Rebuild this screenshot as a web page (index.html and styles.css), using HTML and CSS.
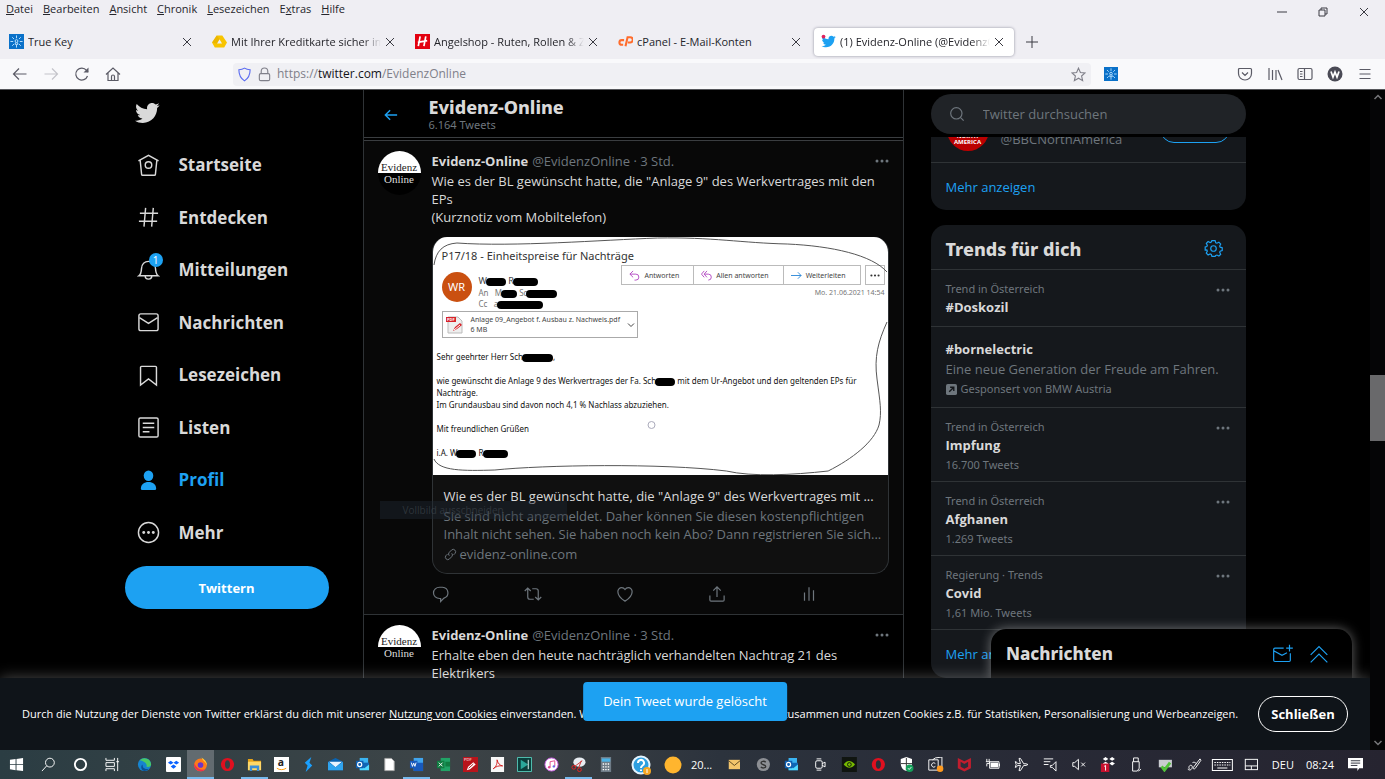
FILE: index.html
```
<!DOCTYPE html>
<html lang="de">
<head>
<meta charset="utf-8">
<title>(1) Evidenz-Online (@EvidenzOnline) / Twitter</title>
<link rel="stylesheet" href="styles.css">
</head>
<body>
<svg class="defs" aria-hidden="true">
  <symbol id="x" viewBox="0 0 10 10"><path d="M1 1l8 8M9 1l-8 8"/></symbol>
  <symbol id="dots" viewBox="0 0 14 4"><circle cx="2" cy="2" r="1.5"/><circle cx="7" cy="2" r="1.5"/><circle cx="12" cy="2" r="1.5"/></symbol>
  <symbol id="truekey" viewBox="0 0 16 16"><path fill="#0a71c9" stroke="none" d="M0 0h16v16H0z"/><g stroke="#bfe3ff" stroke-width="1" fill="none"><path d="M8 1.500v3M8 11.500v3M1.500 8h3M11.500 8h3M3.400 3.400l2 2M10.600 10.600l2 2M12.600 3.400l-2 2M5.400 10.600l-2 2"/><circle cx="8" cy="7.500" r="1.500"/><path d="M7 9l-.5 2h3L9 9"/></g></symbol>
  <symbol id="bird" viewBox="0 0 24 24"><path d="M23.643 4.937c-.835.37-1.732.62-2.675.733.962-.576 1.7-1.49 2.048-2.578-.9.534-1.897.922-2.958 1.13-.85-.904-2.06-1.47-3.4-1.47-2.572 0-4.658 2.086-4.658 4.66 0 .364.042.718.12 1.06-3.873-.195-7.304-2.05-9.602-4.868-.4.69-.63 1.49-.63 2.342 0 1.616.823 3.043 2.072 3.878-.764-.025-1.482-.234-2.11-.583v.06c0 2.257 1.605 4.14 3.737 4.568-.392.106-.803.162-1.227.162-.3 0-.593-.028-.877-.082.593 1.85 2.313 3.198 4.352 3.234-1.595 1.25-3.604 1.995-5.786 1.995-.376 0-.747-.022-1.112-.065 2.062 1.323 4.51 2.093 7.14 2.093 8.57 0 13.255-7.098 13.255-13.254 0-.2-.005-.402-.014-.602.91-.658 1.7-1.477 2.323-2.41z"/></symbol>
  <symbol id="outlook" viewBox="0 0 16 16"><g stroke="none"><path fill="#3bb4f2" d="M5 1h9v8H5z"/><path fill="#1066b5" d="M5 6h10v8H5z"/><path fill="#50d9ff" d="M5 9l5 3 5-4v6H5z"/><path fill="#0f5fb0" d="M1 4h8v8H1z"/></g><circle cx="5" cy="8" r="2.200" fill="none" stroke="#fff" stroke-width="1.300"/></symbol>
  <symbol id="opera" viewBox="0 0 16 16"><path fill="#e0101f" stroke="none" fill-rule="evenodd" d="M8 1a7 7 0 1 0 0 14A7 7 0 0 0 8 1zm0 2.500c1.700 0 2.700 2 2.700 4.500s-1 4.500-2.700 4.500S5.300 10.500 5.300 8s1-4.500 2.700-4.500z"/></symbol>
</svg>

<header class="browser">
  <div class="topline">
    <nav class="menubar" aria-label="Menü">
      <button><u>D</u>atei</button><button><u>B</u>earbeiten</button><button><u>A</u>nsicht</button><button><u>C</u>hronik</button><button><u>L</u>esezeichen</button><button>E<u>x</u>tras</button><button><u>H</u>ilfe</button>
    </nav>
    <div class="winctl">
      <button aria-label="Minimieren"><svg class="line" viewBox="0 0 10 10"><path d="M0 5h10"/></svg></button>
      <button aria-label="Verkleinern"><svg class="line" viewBox="0 0 10 10"><path d="M1 3h6v6H1zM3 3V1h6v6H7"/></svg></button>
      <button aria-label="Schließen"><svg class="line"><use href="#x"/></svg></button>
    </div>
  </div>
  <div class="tabs">
    <div class="tab"><svg class="fav"><use href="#truekey"/></svg><span>True Key</span><button aria-label="Tab schließen"><svg class="line"><use href="#x"/></svg></button></div>
    <div class="tab cut"><svg class="fav" viewBox="0 0 16 16"><path fill="#f8c400" fill-rule="evenodd" d="M5 1.500h6l5 7.500-3 5.500H3L0 9zm3 4L5.300 10h5.400z"/><path fill="#e0a800" d="M5 1.500L8 5.500 5.300 10 0 9z" opacity=".5"/></svg><span>Mit Ihrer Kreditkarte sicher im Internet</span><button aria-label="Tab schließen"><svg class="line"><use href="#x"/></svg></button></div>
    <div class="tab cut"><svg class="fav" viewBox="0 0 16 16"><path fill="#e3000f" d="M0 0h16v16H0z"/><path d="M5.500 2.500L3.500 13M11.500 2.500L9.500 13M3 9l10-2" stroke="#fff" stroke-width="1.800" fill="none"/></svg><span>Angelshop - Ruten, Rollen &amp; Zubehör</span><button aria-label="Tab schließen"><svg class="line"><use href="#x"/></svg></button></div>
    <div class="tab"><svg class="fav" viewBox="0 0 16 16"><path d="M6.500 6.500H4a2.500 2.500 0 0 0 0 5h1.500M8 13l2.200-9.500H13a2.500 2.500 0 0 1 0 5.500h-2.500" fill="none" stroke="#ff6c2c" stroke-width="2.200"/></svg><span>cPanel - E-Mail-Konten</span><button aria-label="Tab schließen"><svg class="line"><use href="#x"/></svg></button></div>
    <div class="tab active cut"><svg class="fav" viewBox="0 0 24 24"><use href="#bird" fill="#1da1f2"/><circle cx="4" cy="4" r="3" fill="#e0245e"/></svg><span>(1) Evidenz-Online (@EvidenzOnline)</span><button aria-label="Tab schließen"><svg class="line"><use href="#x"/></svg></button></div>
    <button class="newtab" aria-label="Neuer Tab"><svg class="line" viewBox="0 0 12 12"><path d="M6 0v12M0 6h12"/></svg></button>
  </div>
  <div class="toolbar">
    <div class="tools">
      <button aria-label="Zurück"><svg viewBox="0 0 16 16"><path d="M14.500 8h-13M7 2.500L1.500 8 7 13.500"/></svg></button>
      <button aria-label="Vor" class="dim"><svg viewBox="0 0 16 16"><path d="M1.500 8h13M9 2.500L14.500 8 9 13.500"/></svg></button>
      <button aria-label="Neu laden"><svg viewBox="0 0 16 16"><path d="M13.500 10A6 6 0 1 1 12.500 4.300L14 6"/><path d="M14.500 1.500v5h-5z" fill="#5b5b66" stroke="none"/></svg></button>
      <button aria-label="Startseite"><svg viewBox="0 0 16 16"><path d="M1 8.500L8 2l7 6.500M3 7v7.500h10V7M6.500 14.500v-4a1.500 1.500 0 0 1 3 0v4"/></svg></button>
    </div>
    <label class="url">
      <svg viewBox="0 0 16 16"><path stroke="#5b6cf0" d="M8 1.200c2 1.300 4 1.700 6 1.800 0 5-1.500 9-6 11.800C3.500 12 2 8 2 3c2-.1 4-.5 6-1.800z"/></svg>
      <svg viewBox="0 0 16 16"><rect x="2.500" y="7" width="11" height="7.500" rx="1.500"/><path d="M4.500 7V4.500a3.500 3.500 0 0 1 7 0V7"/></svg>
      <span class="addr">https://<b>twitter.com</b>/EvidenzOnline</span>
      <svg viewBox="0 0 16 16"><path d="M8 1.200l2 4.600 5 .5-3.700 3.300 1.100 5L8 12l-4.400 2.600 1.100-5L1 6.300l5-.5z"/></svg>
    </label>
    <button class="ext" aria-label="True Key"><svg><use href="#truekey"/></svg></button>
    <div class="tools right">
      <button aria-label="Pocket"><svg viewBox="0 0 16 16"><path d="M2.500 2.500h11a1 1 0 0 1 1 1v4a6.500 6.500 0 0 1-13 0v-4a1 1 0 0 1 1-1zM5 6.500l3 3 3-3"/></svg></button>
      <button aria-label="Bibliothek"><svg viewBox="0 0 16 16"><path d="M2 2v12M5.500 4v10M9 4v10M11 4l4 10"/></svg></button>
      <button aria-label="Seitenleiste"><svg viewBox="0 0 16 16"><rect x="1" y="2.500" width="14" height="11" rx="1.500"/><path d="M7.500 2.500v11M3 5.500h2.500M3 8h2.500M3 10.500h2.500"/></svg></button>
      <button aria-label="Konto"><svg viewBox="0 0 16 16"><circle cx="8" cy="8" r="7.500" fill="#4a4a55" stroke="none"/><path d="M4 5.500l2 5.500 2-5 2 5 2-5.500" stroke="#fff" stroke-width="1.700"/></svg></button>
      <button aria-label="Menü"><svg viewBox="0 0 16 16"><path d="M2.500 3.500h11M2.500 8h11M2.500 12.500h11"/></svg></button>
    </div>
  </div>
</header>

<div class="viewport">
  <div class="page">
    <nav class="side" aria-label="Hauptnavigation">
      <a class="logo" href="#" aria-label="Twitter"><svg><use href="#bird"/></svg></a>
      <ul>
        <li><a href="#"><svg viewBox="0 0 24 24"><path d="M1.500 7.300L12 1.500l10.500 5.800M3.300 6.500l1.500 14.700a1 1 0 0 0 1 .9h12.400a1 1 0 0 0 1-.9l1.500-14.700"/><circle cx="12" cy="11.500" r="3.400"/></svg><span>Startseite</span></a></li>
        <li><a href="#"><svg viewBox="0 0 24 24"><path d="M3 7.500h19M2 16h19M9 2L7.300 21.500M17 2l-1.700 19.500"/></svg><span>Entdecken</span></a></li>
        <li><a href="#"><svg viewBox="0 0 24 24"><path d="M2 17.500h20c-2-1.500-2.500-4-2.700-7.500C19 5.500 16 2.500 12 2.500S5 5.500 4.700 10c-.2 3.500-.7 6-2.700 7.500zM8.500 17.500a3.500 3.500 0 0 0 7 0"/></svg><i class="badge">1</i><span>Mitteilungen</span></a></li>
        <li><a href="#"><svg viewBox="0 0 24 24"><rect x="2" y="3" width="20" height="17.500" rx="2"/><path d="M2.500 7L12 13l9.500-6"/></svg><span>Nachrichten</span></a></li>
        <li><a href="#"><svg viewBox="0 0 24 24"><path d="M3.700 22V3.500a1 1 0 0 1 1-1h14.600a1 1 0 0 1 1 1V22L12 15.500z"/></svg><span>Lesezeichen</span></a></li>
        <li><a href="#"><svg viewBox="0 0 24 24"><rect x="2" y="2" width="20" height="20" rx="1.500"/><path d="M6 7.500h12M6 12h12M6 16.500h7"/></svg><span>Listen</span></a></li>
        <li class="on"><a href="#"><svg viewBox="0 0 24 24"><ellipse cx="12" cy="7" rx="5" ry="5.500"/><path d="M4 20.500c0-4.500 3.500-7 8-7s8 2.500 8 7a1.500 1.500 0 0 1-1.500 1.500h-13A1.500 1.500 0 0 1 4 20.500z"/></svg><span>Profil</span></a></li>
        <li><a href="#"><svg viewBox="0 0 24 24"><circle cx="12" cy="12" r="10.500"/><g fill="currentColor" stroke="none"><circle cx="7" cy="12" r="1.500"/><circle cx="12" cy="12" r="1.500"/><circle cx="17" cy="12" r="1.500"/></g></svg><span>Mehr</span></a></li>
      </ul>
      <button class="tweetbtn">Twittern</button>
    </nav>

    <main class="feed">
      <header class="feedhead">
        <button class="back" aria-label="Zurück"><svg viewBox="0 0 16 16"><path d="M15 8H1.500M7 2.500L1.500 8 7 13.500"/></svg></button>
        <div><h1>Evidenz-Online</h1><p>6.164 Tweets</p></div>
      </header>
      <article class="tweet hot">
        <div class="avatar"><span>Evidenz</span><span>Online</span></div>
        <div class="body">
          <div class="who"><b>Evidenz-Online</b> @EvidenzOnline · 3 Std.<button aria-label="Mehr"><svg><use href="#dots"/></svg></button></div>
          <p>Wie es der BL gewünscht hatte, die "Anlage 9" des Werkvertrages mit den EPs<br>(Kurznotiz vom Mobiltelefon)</p>
          <a class="card" href="#">
            <div class="mail">
              <h2>P17/18 - Einheitspreise für Nachträge</h2>
              <div class="mailhead">
                <div class="wr">WR</div>
                <div class="rcpt">
                  <div class="from">W<i class="ink s20"></i> R<i class="ink s25"></i></div>
                  <div>An&nbsp; &nbsp;M<i class="ink s15"></i> Sc<i class="ink s30"></i></div>
                  <div>Cc&nbsp; &nbsp;a<i class="ink s45"></i></div>
                </div>
                <div class="acts">
                  <div class="btns">
                    <span><svg viewBox="0 0 12 12" class="purple"><path d="M4.500 1L1 4.500 4.500 8M1 4.500h6.500a3 3 0 0 1 0 6.500H6"/></svg>Antworten</span>
                    <span><svg viewBox="0 0 12 12" class="purple"><path d="M3.500 1L.500 4.500 3.500 8M6.500 1L3.500 4.500 6.500 8M3.500 4.500H8a3 3 0 0 1 0 6.500"/></svg>Allen antworten</span>
                    <span><svg viewBox="0 0 12 12" class="blue"><path d="M0 6h11M7.500 2.500L11 6 7.500 9.500"/></svg>Weiterleiten</span>
                    <span class="more"><svg><use href="#dots"/></svg></span>
                  </div>
                  <time>Mo. 21.06.2021 14:54</time>
                </div>
              </div>
              <div class="attach">
                <svg viewBox="0 0 18 18"><path d="M2 1h10l4 4v12H2z" fill="#eee" stroke="#bbb"/><path d="M0 1h10v5H0z" fill="#d8232a" stroke="none"/><path d="M7 15l2-4 5-4 2 2-5 4z" fill="#d8232a" stroke="none"/><path d="M8 14l6-5" stroke="#fff"/><text x="1" y="5" font-size="4" fill="#fff" stroke="none" font-family="Open Sans" font-weight="700">PDF</text></svg>
                <div>Anlage 09_Angebot f. Ausbau z. Nachweis.pdf<br>6 MB</div>
                <svg class="chev" viewBox="0 0 8 8"><path d="M1 2.500l3 3 3-3"/></svg>
              </div>
              <div class="letter">
                <p>Sehr geehrter Herr Sch<i class="ink s30"></i>,</p>
                <p>wie gewünscht die Anlage 9 des Werkvertrages der Fa. Sch<i class="ink s20"></i> mit dem Ur-Angebot und den geltenden EPs für Nachträge.<br>Im Grundausbau sind davon noch 4,1 % Nachlass abzuziehen.</p>
                <p>Mit freundlichen Grüßen</p>
                <p>i.A. W<i class="ink s20"></i> R<i class="ink s25"></i></p>
              </div>
              <svg class="scribble" viewBox="0 0 456 238" preserveAspectRatio="none"><path d="M1 28C3 14 10 7 24 6C80 10 170 3 225 1C280 0 310 6 355 7C400 9 440 18 455 35M455 85C446 105 442 120 445 142C448 165 450 175 447 188C442 205 420 222 396 234C360 238 320 240 294 234C230 226 110 228 62 233C30 234 6 234 1 222"/><circle cx="219" cy="188" r="3.500" stroke="#aab"/></svg>
            </div>
            <div class="cardtext">
              <div class="t">Wie es der BL gewünscht hatte, die "Anlage 9" des Werkvertrages mit ...</div>
              <div class="desc">Sie sind nicht angemeldet. Daher können Sie diesen kostenpflichtigen<br>Inhalt nicht sehen. Sie haben noch kein Abo? Dann registrieren Sie sich...</div>
              <div class="link"><svg viewBox="0 0 16 16"><path d="M6.500 9.500a3 3 0 0 1 0-4.200l3-3a3 3 0 0 1 4.200 4.200l-2 2M9.500 6.500a3 3 0 0 1 0 4.200l-3 3a3 3 0 0 1-4.200-4.200l2-2"/></svg>evidenz-online.com</div>
            </div>
          </a>
          <div class="actions">
            <button aria-label="Antworten"><svg viewBox="0 0 24 24"><path d="M10 3h4a8 7.500 0 0 1 2 14.500L11.500 22v-4H10a8 7.500 0 0 1 0-15z"/></svg></button>
            <button aria-label="Retweeten"><svg viewBox="0 0 24 24"><path d="M1 8l4-4 4 4M5 4v12a3 3 0 0 0 3 3h5M23 16l-4 4-4-4M19 20V8a3 3 0 0 0-3-3h-5"/></svg></button>
            <button aria-label="Gefällt mir"><svg viewBox="0 0 24 24"><path d="M12 21.500C7 18.500 2.500 14 2.500 9A5.200 5.200 0 0 1 7.700 3.500C9.500 3.500 11 4.500 12 6c1-1.500 2.500-2.500 4.300-2.500A5.200 5.200 0 0 1 21.500 9c0 5-4.500 9.500-9.500 12.500z"/></svg></button>
            <button aria-label="Teilen"><svg viewBox="0 0 24 24"><path d="M12 16V2.500M7 7.500l5-5 5 5M2.500 14v6a1.500 1.500 0 0 0 1.500 1.500h16a1.500 1.500 0 0 0 1.500-1.500v-6"/></svg></button>
            <button aria-label="Statistik"><svg viewBox="0 0 24 24"><path d="M6 21V10M12 21V3M18 21V7"/></svg></button>
          </div>
        </div>
      </article>
      <article class="tweet">
        <div class="avatar"><span>Evidenz</span><span>Online</span></div>
        <div class="body">
          <div class="who"><b>Evidenz-Online</b> @EvidenzOnline · 3 Std.<button aria-label="Mehr"><svg><use href="#dots"/></svg></button></div>
          <p>Erhalte eben den heute nachträglich verhandelten Nachtrag 21 des<br>Elektrikers</p>
        </div>
      </article>
      <div class="ghost">Vollbild ausschneiden</div>
    </main>

    <aside class="right-col">
      <label class="search"><svg viewBox="0 0 24 24"><circle cx="11" cy="11" r="8.500"/><path d="M17 17l5 5"/></svg><input type="text" placeholder="Twitter durchsuchen" aria-label="Twitter durchsuchen"></label>
      <section class="box first">
        <div class="follow"><div class="bbc">NORTH<br>AMERICA</div><span>@BBCNorthAmerica</span><button>Folgen</button></div>
        <a class="morelink" href="#">Mehr anzeigen</a>
      </section>
      <section class="box">
        <header><h2>Trends für dich</h2><button aria-label="Einstellungen"><svg viewBox="0 0 24 24"><circle cx="12" cy="12" r="3.500"/><path d="M10 2h4l.8 2.700 1.500.6 2.500-1.300 2.300 2.300-1.300 2.500.6 1.500 2.600.7v3.500l-2.600.8-.6 1.500 1.300 2.500-2.300 2.300-2.500-1.300-1.500.6L14 22h-4l-.8-2.600-1.500-.6-2.500 1.300-2.300-2.300 1.300-2.500-.6-1.500L1.500 14v-4l2.100-.5.6-1.500-1.300-2.500 2.300-2.300 2.500 1.300 1.500-.6z"/></svg></button></header>
        <div class="trend"><small>Trend in Österreich</small><b>#Doskozil</b><button aria-label="Mehr"><svg><use href="#dots"/></svg></button></div>
        <div class="trend promo"><b>#bornelectric</b><span>Eine neue Generation der Freude am Fahren.</span><small><svg viewBox="0 0 12 12"><rect width="12" height="12" rx="2" fill="#6e767d"/><path d="M3.500 8.500L8 4M4.500 3.500h4v4" stroke="#15181c" stroke-width="1.500" fill="none"/></svg>Gesponsert von BMW Austria</small></div>
        <div class="trend full"><small>Trend in Österreich</small><b>Impfung</b><small>16.700 Tweets</small><button aria-label="Mehr"><svg><use href="#dots"/></svg></button></div>
        <div class="trend full"><small>Trend in Österreich</small><b>Afghanen</b><small>1.269 Tweets</small><button aria-label="Mehr"><svg><use href="#dots"/></svg></button></div>
        <div class="trend full"><small>Regierung · Trends</small><b>Covid</b><small>1,61 Mio. Tweets</small><button aria-label="Mehr"><svg><use href="#dots"/></svg></button></div>
        <a class="morelink" href="#">Mehr anzeigen</a>
      </section>
    </aside>

    <section class="drawer">
      <h2>Nachrichten</h2>
      <button aria-label="Neue Nachricht"><svg viewBox="0 0 24 24"><path d="M14 5H3.500A1.500 1.500 0 0 0 2 6.500v13A1.500 1.500 0 0 0 3.500 21h17a1.500 1.500 0 0 0 1.500-1.500V11M2 8l10 5.500 6-3M21 1v8M17 5h8"/></svg></button>
      <button aria-label="Öffnen"><svg viewBox="0 0 24 24"><path d="M2 13L12 3l10 10M2 22l10-10 10 10"/></svg></button>
    </section>
    <section class="cookies">
      <p>Durch die Nutzung der Dienste von Twitter erklärst du dich mit unserer <a href="#">Nutzung von Cookies</a> einverstanden. Wir und unsere Partner arbeiten global zusammen und nutzen Cookies z.B. für Statistiken, Personalisierung und Werbeanzeigen.</p>
      <button>Schließen</button>
    </section>
    <div class="toast" role="status">Dein Tweet wurde gelöscht</div>
  </div>
  <div class="scroll" aria-hidden="true">
    <svg viewBox="0 0 10 10"><path d="M1.500 7L5 3.500 8.500 7"/></svg><div class="thumb"></div><svg viewBox="0 0 10 10"><path d="M1.500 3L5 6.500 8.500 3"/></svg>
  </div>
</div>

<footer class="taskbar">
  <div class="sys">
    <button aria-label="Start"><svg viewBox="0 0 16 16"><path fill="#fff" stroke="none" d="M1 3l6-1v5.600H1zM8 2l7-1v6.600H8zM1 8.500h6V14l-6-1zM8 8.500h7V15l-7-1z"/></svg></button>
    <button aria-label="Suche"><svg viewBox="0 0 16 16"><circle cx="9.500" cy="6" r="4.700"/><path d="M6 9.500L1 15"/></svg></button>
    <button aria-label="Cortana"><svg viewBox="0 0 16 16"><circle cx="8" cy="8" r="6" stroke-width="2"/></svg></button>
    <button aria-label="Aufgaben"><svg viewBox="0 0 16 16"><path d="M1 1v2.500h9V1M1 15v-2.500h9V15M1 6h9v4H1zM13.500 1v14M12 5h3"/></svg></button>
    <button aria-label="Edge"><svg viewBox="0 0 16 16"><circle cx="8" cy="8" r="7" fill="#1684cf" stroke="none"/><path fill="#49c965" stroke="none" d="M3 3.500A7 7 0 0 1 15 8c0 2-2 3-5 2.500 1.500-3-2-6-7-7z"/><path fill="#0b4f94" stroke="none" d="M6 8c-.5 4 3 5.500 7 4.500A7 7 0 0 1 6 14.500C4 12 4 9 6 8z"/></svg></button>
  </div>
  <div class="apps">
    <button aria-label="Dropbox"><svg viewBox="0 0 16 16"><rect width="16" height="16" rx="1" fill="#fff" stroke="none"/><path fill="#0a62ff" stroke="none" d="M5 4l3 2-3 2-3-2zM11 4l3 2-3 2-3-2zM8 8l3 2-3 2.500L5 10z"/></svg></button>
    <button aria-label="Firefox" class="cur run"><svg viewBox="0 0 16 16"><circle cx="8" cy="8.500" r="6.800" fill="#ff7a1a" stroke="none"/><path fill="#ffcf30" stroke="none" d="M9 .5c3 2 6 4.500 5.800 8.500C14 5.500 11 5 9 .5z"/><path fill="#f0324b" stroke="none" d="M1.300 7A7 7 0 0 0 8 15.300c2.500 0 4-1 5.500-2.500C8 15 4 12 1.300 7z"/><circle cx="8" cy="8.500" r="3" fill="#6a35c9" stroke="none"/></svg></button>
    <button aria-label="Opera"><svg><use href="#opera"/></svg></button>
    <button aria-label="Explorer" class="run"><svg viewBox="0 0 16 16"><path fill="#e8a317" stroke="none" d="M1 2h5l1 2h8v10H1z"/><path fill="#ffd867" stroke="none" d="M1 5h14v9H1z"/><path fill="#3d8fd6" stroke="none" d="M3 9h10v6h-2.500v-3h-5v3H3z"/></svg></button>
    <button aria-label="Amazon"><svg viewBox="0 0 16 16"><path fill="#fff" stroke="none" d="M0 0h16v16H0z"/><text x="4" y="10" font-size="11" font-weight="700" font-family="Open Sans" fill="#222" stroke="none">a</text><path d="M3 12c3 2 7 2 10 0" stroke="#f90"/></svg></button>
    <button aria-label="App"><svg viewBox="0 0 16 16"><path fill="#1aa0ff" stroke="none" d="M11 0L4 6l3 3-2 7 7-7-3-3z"/></svg></button>
    <button aria-label="Mail"><svg viewBox="0 0 16 16"><path fill="#0a63b0" stroke="none" d="M0 5l8-4 8 4v9H0z"/><path fill="#e8f4ff" stroke="none" d="M1 5h14l-7 6z"/><path fill="#2fa4ef" stroke="none" d="M0 5l8 6 8-6v9H0z"/></svg></button>
    <button aria-label="Outlook"><svg><use href="#outlook"/></svg></button>
    <button aria-label="Dokument"><svg viewBox="0 0 16 16"><path fill="#fff" stroke="#aaa" d="M3 1.500h7l3 3v10H3z"/></svg></button>
    <button aria-label="Word" class="run"><svg viewBox="0 0 16 16"><path fill="#41a5ee" stroke="none" d="M5 1h10v14H5z"/><path fill="#185abd" stroke="none" d="M5 6h10v9H5zM1 4h8v8H1z"/><path d="M2.500 6l1.200 4L5 6.500 6.300 10l1.200-4" stroke="#fff"/></svg></button>
    <button aria-label="Excel"><svg viewBox="0 0 16 16"><path fill="#21a366" stroke="none" d="M5 1h10v14H5z"/><path fill="#107c41" stroke="none" d="M10 5h5v5h-5zM1 4h8v8H1z"/><path d="M3 6l4 4M7 6l-4 4" stroke="#fff"/></svg></button>
    <button aria-label="PDF-Editor"><svg viewBox="0 0 16 16"><path fill="#b8141b" stroke="none" d="M0 0h16v16H0z"/><path fill="#fff" stroke="none" d="M4 14l1.500-3.500L11 5.500l2.500 2.500-6 5z"/><path d="M6 12l5-4.500" stroke="#b8141b"/><text x="1" y="4.500" font-size="4.500" font-family="Open Sans" fill="#fff" stroke="none">PDF</text></svg></button>
    <button aria-label="Acrobat"><svg viewBox="0 0 16 16"><path fill="#f7f7f7" stroke="none" d="M1 0h14v16H1z"/><path d="M3.500 12.500C7 10 8 6 7.500 3c1 4 3 6 6 6.500-4-.5-7 .5-10 3z" stroke="#d11a1a"/></svg></button>
    <button aria-label="Filmora"><svg viewBox="0 0 16 16"><path fill="#0b3f3c" stroke="#54c7b8" d="M.5.5h15v15H.5z"/><path fill="#2aa79a" stroke="none" d="M4 3l8 5-8 5z"/><path d="M12 3v10" stroke="#e6fffa"/></svg></button>
    <button aria-label="iTunes"><svg viewBox="0 0 16 16"><circle cx="8" cy="8" r="7" fill="#fff" stroke="#c85be0"/><path d="M6.500 11V5l5-1v6" stroke="#e0468c"/><circle cx="5.500" cy="11" r="1.300" fill="#e0468c" stroke="none"/><circle cx="10.500" cy="10" r="1.300" fill="#6a6ae0" stroke="none"/></svg></button>
    <button aria-label="Snipping Tool" class="run"><svg viewBox="0 0 16 16"><ellipse cx="9" cy="5.500" rx="6.500" ry="5" fill="#e8edf2" stroke="none"/><path d="M4 10l8-6M8 12L11 4" stroke="#c33"/><circle cx="3" cy="11" r="2" stroke="#e22"/><circle cx="9" cy="13.500" r="2" stroke="#e22"/></svg></button>
    <button aria-label="Rechner"><svg viewBox="0 0 16 16"><path fill="#6f7c87" stroke="none" d="M3 0h11v16H3z"/><path fill="#4bb4e8" stroke="none" d="M4 1.500h9V5H4z"/><path d="M5 7.500h7M5 10.500h7M5 13.500h7" stroke="#fff" stroke-width="1.500" stroke-dasharray="1.500 1.200"/></svg></button>
  </div>
  <div class="sys big">
    <button aria-label="Hilfe"><svg viewBox="0 0 20 20"><circle cx="10" cy="10" r="8.500" fill="#2d9fe0" stroke="#e4f4ff" stroke-width="2"/><path d="M7 8a3 3 0 1 1 4.500 2.500C10.300 11.300 10 12 10 13M10 14.500V16" stroke="#fff" stroke-width="2"/><circle cx="16" cy="16" r="4" fill="#f5a623" stroke="none"/><path d="M16 14v4" stroke="#fff"/></svg></button>
    <button aria-label="Wetter"><svg viewBox="0 0 20 20"><circle cx="10" cy="10" r="8.500" fill="#ffb52e" stroke="none"/></svg></button>
  </div>
  <span class="temp">20...</span>
  <div class="tray">
    <svg viewBox="0 0 16 16"><path fill="#f3c56b" stroke="none" d="M2 3h12v10H2z"/><path d="M2 4l6 5 6-5" stroke="#5a4520"/></svg>
    <svg viewBox="0 0 16 16"><circle cx="8" cy="8" r="7" fill="#8c8f94" stroke="none"/><path d="M10.500 5.500C9 4 5.500 4.500 5.500 6.500S10.500 8 10.500 10s-4 2.200-5.200.5" stroke="#333" stroke-width="1.500"/></svg>
    <svg><use href="#outlook"/></svg>
    <svg viewBox="0 0 16 16"><rect x="3" y="4" width="7" height="8" rx="1.500"/><path d="M10 7l3-1.500v5L10 9M4 2h5M4 14h5"/></svg>
    <svg viewBox="0 0 16 16"><path fill="#101510" stroke="none" d="M0 0h16v16H0z"/><path d="M2 8c3-5 8-5 12 0-4 5-9 4-12 0z" fill="#76b900" stroke="none"/><circle cx="8" cy="8" r="2" fill="none" stroke="#101510"/></svg>
    <svg><use href="#opera"/></svg>
    <svg viewBox="0 0 16 16"><path fill="#fff" stroke="none" d="M8 0l6 2v5c0 4-2 7-6 8-4-1-6-4-6-8V2z"/><path d="M8 1v13M2 7h12" stroke="#333"/><circle cx="11.500" cy="12" r="4" fill="#14a05a" stroke="none"/><path d="M9.800 12l1.200 1.300 2.300-2.500" stroke="#fff"/></svg>
    <svg viewBox="0 0 16 16"><path d="M1 3h10v11H1zM5 3l3-2 7-1v11"/><path d="M8 7a2.300 2.300 0 1 0 0 3"/><circle cx="13" cy="12.500" r="3.500" fill="#ff9a1f" stroke="none"/></svg>
    <svg viewBox="0 0 16 16"><path fill="#c01d2e" stroke="none" d="M1 1l7 3.500L15 1v11l-7 3.500L1 12z"/><path fill="#2a2d39" stroke="none" d="M4 5l4 2.500L12 5v5.500l-4 2-4-2z"/></svg>
    <svg viewBox="0 0 16 16"><path d="M4 5h10v7H4zM14.500 7v3M1 2v3M3.500 2v3M0 5h4v2H1v3"/><path fill="#fff" stroke="none" d="M5 6h8v5H5z"/></svg>
    <svg viewBox="0 0 16 16"><path d="M15 8l-2-.8h-2.500L7 1.500H5.500L7 7H4L2.500 5h-1L2.500 8l-1 3h1L4 9h3l-1.500 5.500H7L10.500 9H13z"/></svg>
    <svg viewBox="0 0 16 16"><path d="M1 2h10M1 5h7M1 8h5M8 9h2l4-4v10l-4-4H8z"/></svg>
    <svg viewBox="0 0 16 16"><path d="M1 6h2l4-3.500v11L3 10H1zM10 6l4 4M14 6l-4 4"/></svg>
    <svg viewBox="0 0 16 16"><path fill="#fff" stroke="none" d="M5 0l3 2-3 2-3-2zM12 0l3 2-3 2-3-2zM5 5l3 2-3 2-3-2zM12 5l3 2-3 2-3-2z"/><path fill="#c8102e" stroke="none" d="M0 7h9v9H0z"/><path d="M3.500 10l1.500-1v5.500" stroke="#fff"/></svg>
    <svg viewBox="0 0 16 16"><path d="M5 5V1h5v4M4 5h7v7l-2 3H4zM10 15l3-2"/></svg>
    <svg viewBox="0 0 16 16"><path fill="#c9ccd0" stroke="none" d="M1 3h14v8H1z"/><path d="M4 10l3 4 6-8" stroke="#52c23a" stroke-width="3"/></svg>
    <svg viewBox="0 0 16 16"><path d="M1 13c4 3 6-3 4-4s-4 2-2 4M7 11l7-9 1 1.500L9 12c-1 1.500-3 .5-2-1zM6 6c2-1 3 0 4 1"/></svg>
    <svg class="kb" viewBox="0 0 22 16"><rect x="1" y="2.500" width="20" height="11"/><path d="M3 5.500h16M3 8h16" stroke-dasharray="1.500 1"/><path d="M6 11h10"/></svg>
    <svg viewBox="0 0 16 16"><rect x="1.500" y="2.500" width="13" height="11"/><path d="M1.500 9.500h13M8 9.500v4"/></svg>
  </div>
  <span class="lang">DEU</span><time class="clock">08:24</time>
  <button class="notes" aria-label="Benachrichtigungen"><svg viewBox="0 0 16 16"><path fill="#fff" stroke="none" d="M0 1h16v11h-4l-2 3v-3H0z"/><path d="M3 4h10M3 6.500h10M3 9h7" stroke="#292b36"/></svg></button>
</footer>
</body>
</html>
```
FILE: styles.css
```
* { box-sizing: border-box; margin: 0; padding: 0; }
html, body { height: 100%; }
body {
  display: flex; flex-direction: column; overflow: hidden;
  background: #000; color: #d9d9d9;
  font-family: "Open Sans", "Noto Sans", sans-serif; font-size: 13px; line-height: 18px;
}
button { background: none; border: 0; font: inherit; color: inherit; }
a { color: inherit; text-decoration: none; }
ul { list-style: none; }
svg { display: block; flex: none; fill: none; stroke: currentColor; }
.defs { position: absolute; width: 0; height: 0; }

/* browser chrome */
.browser { background: #efeef3; color: #25252b; font-size: 11px; line-height: 16px; border-bottom: 1px solid #56575b; }
.topline { display: flex; justify-content: space-between; height: 27px; }
.menubar { display: flex; align-items: flex-start; gap: 10px; padding: 1px 0 0 6px; }
.winctl { display: flex; align-items: center; gap: 31px; padding: 0 16px 3px 0; }
.line { width: 10px; height: 10px; stroke: #3a3a42; stroke-width: 1; }
.tabs { display: flex; align-items: center; gap: 3px; height: 32px; padding: 0 0 3px 2px; }
.tab { display: flex; align-items: center; gap: 4px; flex: 0 1 200px; min-width: 0; height: 28px; padding: 0 10px 0 7px; border-radius: 4px; }
.tab span { flex: 1; overflow: hidden; white-space: nowrap; }
.tab.cut { gap: 4px; }
.tab.cut span { mask-image: linear-gradient(90deg, #000 88%, transparent); }
.tab.active { background: #fff; box-shadow: 0 0 3px #8f8f9d; }
.fav { width: 15px; height: 15px; stroke: none; }
.newtab { padding: 0 9px; }
.newtab .line { width: 12px; height: 12px; }
.toolbar { display: flex; align-items: center; height: 30px; padding: 0 12px; background: #f9f9fb; color: #5b5b66; }
.tools { display: flex; gap: 15px; margin-right: 112px; }
.tools svg, .url svg { width: 16px; height: 16px; stroke-width: 1.2; }
.tools .dim { color: #c4c4ca; }
.url { display: flex; align-items: center; gap: 5px; flex: 1; height: 23px; padding: 0 5px 0 4px; border-radius: 4px; background: #f0f0f4; font-size: 12px; color: #80808a; }
.url svg { width: 15px; height: 15px; }
.addr { flex: 1; }
.addr b { font-weight: 400; color: #15141a; }
.ext { margin: 0 119px 0 13px; }
.ext svg { width: 14px; height: 14px; stroke: none; }
.tools.right { gap: 14px; margin-right: 0; }

/* page frame */
.viewport { flex: 1; display: flex; min-height: 0; }
.page { flex: 1; position: relative; display: grid; grid-template-columns: 238px minmax(0, 541px) 342px; justify-content: center; overflow: hidden; }
.scroll { display: flex; flex-direction: column; align-items: center; width: 15px; padding: 2px 0; background: #050506; color: #77777a; }
.scroll svg { width: 10px; height: 10px; stroke-width: 1.5; }
.thumb { width: 100%; height: 66px; margin: 273px 0 auto; background: #69696b; }

/* left navigation */
.side { padding: 10px 34px 0 0; }
.logo { display: block; width: 26px; margin-left: 9px; }
.logo svg { width: 26px; height: 26px; fill: #d9d9d9; stroke: none; }
.side ul { display: flex; flex-direction: column; justify-content: space-between; height: 404px; margin: 21px 0 15px; }
.side li a { position: relative; display: flex; align-items: center; gap: 19px; height: 36px; padding-left: 12px; font-size: 17px; font-weight: 700; }
.side li svg { width: 23px; height: 23px; stroke-width: 1.5; }
.side .on { color: #1da1f2; }
.side .on svg { fill: #1da1f2; stroke: none; }
.badge { position: absolute; left: 24px; top: 1px; width: 14px; height: 14px; border-radius: 50%; background: #1da1f2; color: #fff; font: 400 10px/14px "Noto Sans", sans-serif; text-align: center; }
.tweetbtn { width: 100%; height: 43px; border-radius: 22px; background: #1da1f2; color: #fff; font-weight: 700; }

/* timeline */
.feed { position: relative; border: solid #2f3336; border-width: 0 1px; }
.feedhead { display: flex; align-items: center; gap: 31px; height: 51px; padding: 3px 20px 0; border-bottom: 4px double #3a3d40; }
.back { color: #1da1f2; }
.back svg { width: 14px; height: 14px; stroke-width: 1.6; }
.feedhead h1 { font-size: 18px; line-height: 20px; }
.feedhead p { font-size: 11px; line-height: 16px; color: #6e767d; }
.tweet { display: flex; gap: 11px; padding: 10px 14px; border-bottom: 1px solid #2f3336; }
.tweet.hot { background: #080808; }
.avatar { flex: none; width: 43px; height: 44px; padding-top: 10px; border-radius: 50%; background: linear-gradient(#fff 50%, #000 50%); color: #222; font: 11px/12px "Liberation Serif", serif; text-align: center; }
.avatar span { display: block; }
.avatar span + span { color: #ddd; }
.body { flex: 1; min-width: 0; }
.who { display: flex; align-items: center; gap: 4px; height: 20px; margin-bottom: 1px; color: #6e767d; }
.who b { color: #d9d9d9; }
.who button { margin-left: auto; }
.who svg, .trend button svg { width: 14px; height: 4px; fill: #6e767d; stroke: none; }
.card { display: block; margin-top: 11px; border: 1px solid #2f3336; border-top: 0; border-radius: 15px; overflow: hidden; background: #101010; color: #6e767d; }
.cardtext { padding: 12px 11px 10px; }
.cardtext .t { margin-bottom: 2px; white-space: nowrap; color: #d9d9d9; }
.desc { white-space: nowrap; }
.link { display: flex; align-items: center; gap: 3px; margin-top: 2px; }
.link svg { width: 13px; height: 13px; stroke-width: 1.2; }
.actions { display: flex; gap: 74px; margin-top: 11px; padding-bottom: 1px; color: #6e767d; }
.actions svg { width: 18px; height: 18px; stroke-width: 1.6; }

/* mail preview */
.mail { position: relative; height: 238px; padding: 10px 3px 0 9px; background: #fff; color: #444; font-family: "Noto Sans", sans-serif; font-size: 7px; line-height: 11px; }
.mail h2 { font-size: 11px; line-height: 18px; font-weight: 400; color: #333; }
.mailhead { display: flex; gap: 7px; height: 46px; }
.wr { width: 30px; height: 30px; margin-top: 7px; border-radius: 50%; background: #ca5010; color: #fff; font-size: 11px; line-height: 30px; text-align: center; }
.rcpt { padding-top: 10px; font-size: 8px; white-space: nowrap; color: #777; }
.rcpt .from { font-size: 9px; line-height: 12px; color: #444; }
.ink { display: inline-block; height: 8px; margin-left: -1px; border-radius: 4px; background: #000; vertical-align: middle; }
.s15 { width: 16px; } .s20 { width: 20px; } .s25 { width: 25px; } .s30 { width: 31px; } .s45 { width: 46px; }
.acts { display: flex; flex-direction: column; align-items: flex-end; margin-left: auto; color: #777; }
.btns { display: flex; }
.btns span { display: flex; align-items: center; gap: 4px; height: 20px; padding: 0 14px 0 7px; border: 1px solid #bbb; border-right: 0; color: #444; }
.btns svg { width: 11px; height: 11px; }
.btns span:nth-child(3) { border-right: 1px solid #bbb; }
.btns .more { margin-left: 4px; padding: 0 4px; border: 1px solid #bbb; }
.btns .more svg { width: 10px; height: 3px; fill: #333; stroke: none; }
.acts time { font-size: 7px; line-height: 16px; }
.purple { stroke: #b146c2; }
.blue { stroke: #2b88d8; }
.attach { display: flex; align-items: center; gap: 7px; width: 196px; height: 27px; padding: 0 3px; border: 1px solid #aaa; line-height: 10px; white-space: nowrap; }
.attach svg { width: 18px; height: 18px; }
.attach svg.chev { width: 8px; height: 8px; margin-left: auto; }
.letter { margin: 13px 0 0 -5px; font-size: 8px; line-height: 12px; color: #111; }
.letter p { margin-bottom: 12px; }
.scribble { position: absolute; inset: 0; width: 100%; height: 100%; stroke: #555; }

.ghost { position: absolute; left: 16px; top: 411px; width: 187px; height: 18px; padding-left: 23px; background: rgba(30, 40, 52, .45); color: rgba(70, 78, 86, .55); font-size: 10px; line-height: 18px; }

/* right column */
.right-col { padding-left: 27px; }
.search { display: flex; align-items: center; gap: 18px; height: 40px; margin: 4px 0 3px; padding: 0 18px; border-radius: 20px; background: #202327; color: #6e767d; }
.search svg { width: 16px; height: 16px; stroke-width: 1.8; }
.search input { flex: 1; min-width: 0; border: 0; outline: 0; background: none; font: inherit; color: #d9d9d9; }
.search input::placeholder { color: #6e767d; opacity: 1; }
.box { margin-bottom: 15px; border-radius: 15px; overflow: hidden; background: #15181c; }
.box.first { border-radius: 0 0 15px 15px; }
.follow { display: flex; align-items: flex-end; gap: 12px; height: 26px; padding: 0 16px 11px; border-bottom: 1px solid #2f3336; color: #6e767d; overflow: hidden; }
.bbc { width: 42px; height: 42px; padding-top: 24px; border-radius: 50%; background: #bb0000; color: #fff; font-size: 6px; line-height: 6px; font-weight: 700; text-align: center; }
.follow span { padding-bottom: 3px; }
.follow button { width: 70px; height: 28px; margin: 0 0 8px auto; border: 1px solid #1da1f2; border-radius: 14px; color: #1da1f2; font-weight: 700; }
.morelink { display: block; padding: 14px 15px; line-height: 20px; color: #1da1f2; }
.box header { display: flex; align-items: center; justify-content: space-between; height: 45px; padding: 3px 23px 0 15px; border-bottom: 1px solid #2f3336; }
.first .morelink { padding-bottom: 13px; }
.box h2 { font-size: 18px; line-height: 22px; }
.drawer h2 { font-size: 17px; line-height: 22px; }
.feedhead h1, .box h2, .drawer h2 { font-family: "Noto Sans", sans-serif; font-weight: 800; }
.box header button, .drawer button { color: #1da1f2; }
.box header svg { width: 19px; height: 19px; stroke-width: 1.5; }
.trend { position: relative; display: flex; flex-direction: column; padding: 10px 15px; border-bottom: 1px solid #2f3336; }
.trend small, .trend span { color: #6e767d; }
.trend small { font-size: 11px; }
.trend small, .feedhead p { font-family: "Noto Sans", sans-serif; }
.trend button { position: absolute; right: 16px; top: 18px; line-height: 0; }
.trend.promo { gap: 2px; padding: 13px 15px 9px; }
.promo small { display: flex; align-items: center; gap: 4px; }
.promo svg { width: 11px; height: 11px; stroke: none; }
.trend.full { padding: 10px 15px 7px; }
.full b { margin-bottom: 2px; }

/* overlays */
.drawer { position: absolute; right: 18px; bottom: 72px; display: flex; align-items: center; gap: 17px; width: 361px; height: 49px; padding: 0 23px 0 15px; border-radius: 15px 15px 0 0; background: #000; box-shadow: 0 0 12px rgba(255, 255, 255, .4); }
.drawer h2 { flex: 1; }
.drawer svg { width: 20px; height: 20px; stroke-width: 1.4; overflow: visible; }
.cookies { position: absolute; left: 0; right: 0; bottom: 0; display: flex; align-items: center; justify-content: space-between; height: 72px; padding: 0 22px; background: #0f1419; color: #fff; font-size: 11px; box-shadow: 0 0 14px rgba(255, 255, 255, .3); }
.cookies p { white-space: nowrap; }
.cookies a { text-decoration: underline; }
.cookies button { height: 36px; width: 90px; border: 1px solid #fff; border-radius: 18px; font-size: 13px; font-weight: 700; }
.toast { position: absolute; left: 50%; bottom: 29px; transform: translateX(-50%); padding: 0 20px; border-radius: 4px; background: #1da1f2; color: #fff; line-height: 39px; white-space: nowrap; }

/* taskbar */
.taskbar { display: flex; align-items: center; height: 29px; background: linear-gradient(90deg, #2b3d43, #3c4447 30%, #393f43 40%, #2c333d 52%, #282a36 75%, #262430); color: #fff; font-size: 11px; }
.taskbar svg { width: 15px; height: 15px; }
.sys, .apps, .tray { display: flex; align-items: center; height: 100%; }
.sys button { display: grid; place-items: center; width: 32px; height: 100%; }
.sys.big { margin-left: 6px; }
.taskbar .big svg { width: 20px; height: 20px; }
.apps button { display: grid; place-items: center; width: 27px; height: 100%; border-bottom: 2px solid transparent; border-top: 2px solid transparent; }
.apps .run { border-bottom-color: #76b9ed; }
.apps .cur { background: #626b70; }
.temp { width: 31px; padding-left: 2px; }
.tray { flex: 1; }
.tray svg { flex: 1; stroke-width: 1; }
.tray .kb { width: 22px; height: 16px; }
.lang { margin-left: 6px; }
.clock { margin: 0 14px 0 12px; }
.notes { padding-right: 22px; }
```
